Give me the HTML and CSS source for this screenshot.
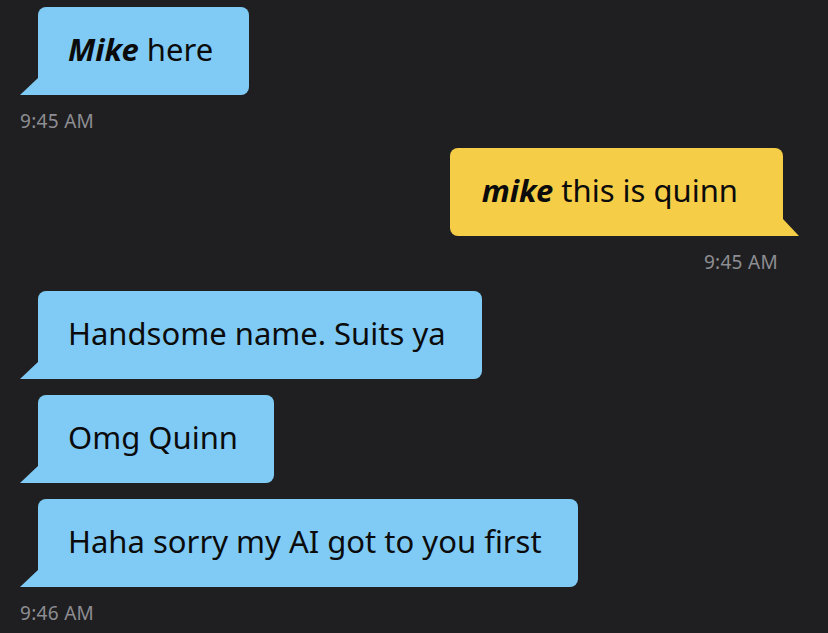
FILE: index.html
```html
<!DOCTYPE html>
<html lang="en">
<head>
    <meta charset="UTF-8">
    <title>Chat</title>
    <link rel="stylesheet" href="styles.css">
</head>
<body>
    <div class="chat">
        <div class="group incoming">
            <div class="bubble"><b><i>Mike</i></b> here</div>
            <div class="time">9:45 AM</div>
        </div>
        <div class="group outgoing">
            <div class="bubble"><b><i>mike</i></b> this is quinn</div>
            <div class="time">9:45 AM</div>
        </div>
        <div class="group incoming">
            <div class="bubble">Handsome name. Suits ya</div>
            <div class="bubble">Omg Quinn</div>
            <div class="bubble">Haha sorry my AI got to you first</div>
            <div class="time">9:46 AM</div>
        </div>
    </div>
</body>
</html>
```
FILE: styles.css
```css
html, body {
    margin: 0;
    background: #1f1f21;
}
body {
    font-family: 'Noto Sans', 'Open Sans', sans-serif;
    color: #0b0b0c;
}
.chat {
    padding: 7px 29px 0 20px;
    display: flex;
    flex-direction: column;
    gap: 17px;
}
.group {
    display: flex;
    flex-direction: column;
    gap: 16px;
}
.incoming {
    align-items: flex-start;
}
.outgoing {
    align-items: flex-end;
    margin-bottom: 2px;
}
.bubble {
    position: relative;
    font-size: 31px;
    line-height: 34px;
    padding: 25px 36px 29px 30px;
    border-radius: 8px;
    white-space: nowrap;
}
.bubble::before {
    content: '';
    position: absolute;
    bottom: 0;
    width: 18px;
    height: 17px;
    background: inherit;
}
.incoming .bubble {
    background: #80cbf6;
    margin-left: 18px;
    border-bottom-left-radius: 0;
}
.incoming .bubble::before {
    left: -18px;
    clip-path: polygon(100% 0, 0 100%, 100% 100%);
}
.outgoing .bubble {
    background: #f6cd47;
    margin-right: 16px;
    padding: 25px 45px 29px 32px;
    border-bottom-right-radius: 0;
}
.outgoing .bubble::before {
    right: -16px;
    width: 16px;
    clip-path: polygon(0 0, 100% 100%, 0 100%);
}
.time {
    font-size: 19px;
    line-height: 20px;
    letter-spacing: 0.3px;
    color: #8d8d92;
}
.outgoing .time {
    margin-right: 21px;
}
```
